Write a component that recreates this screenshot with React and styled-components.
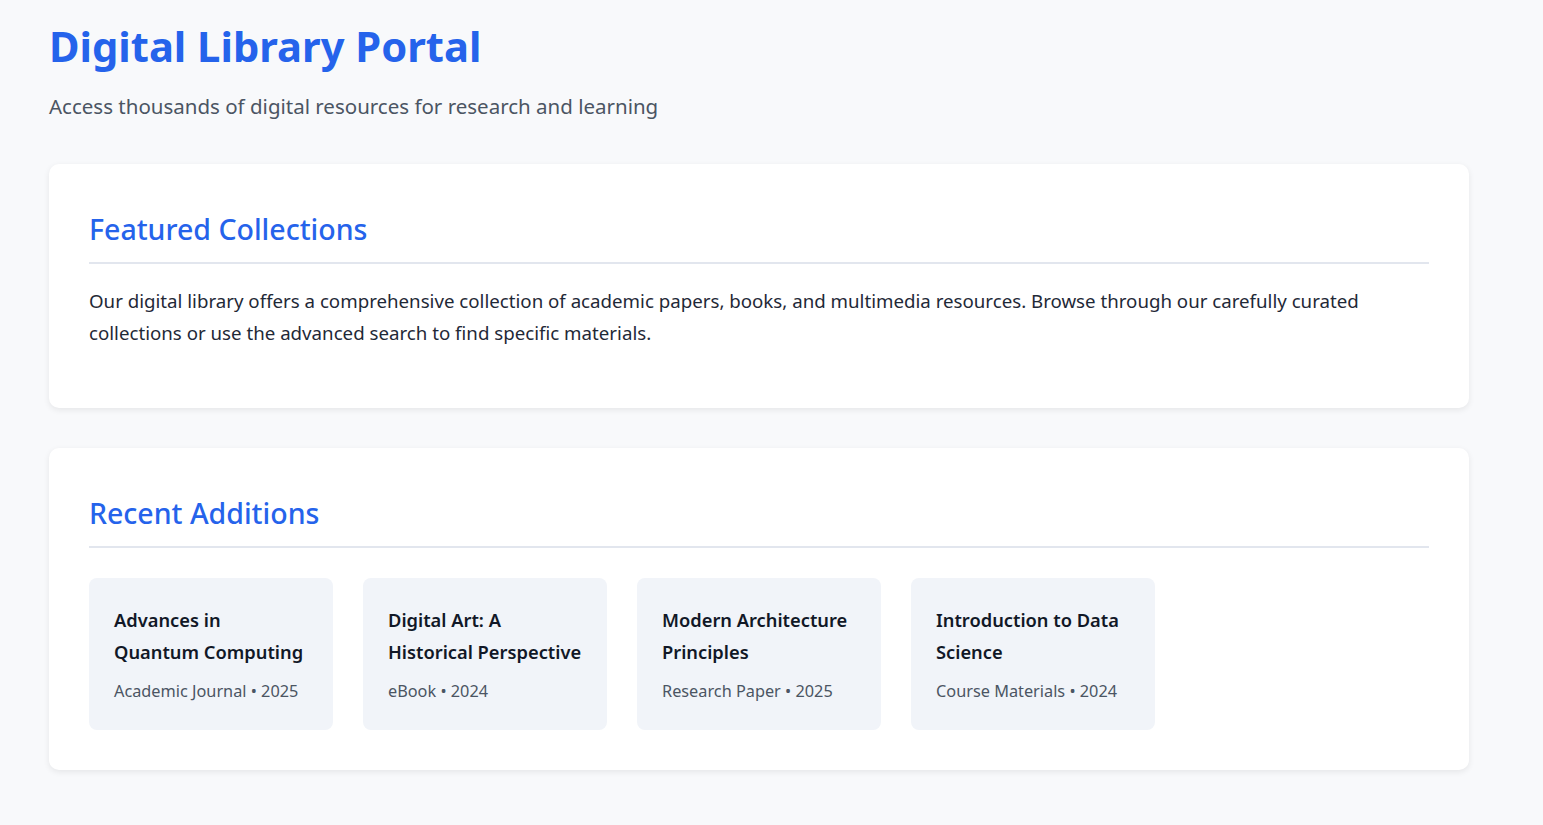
import React from 'react';
import styled, { createGlobalStyle } from 'styled-components';

const GlobalStyle = createGlobalStyle`
  * { box-sizing: border-box; }
  body {
    margin: 0;
    background: #f8f9fb;
    font-family: "Noto Sans", "Open Sans", sans-serif;
    color: #1f2937;
  }
`;

const Page = styled.div`
  max-width: 1518px;
  padding: 18px 49px 0;
`;

const Header = styled.header`
  margin-bottom: 44px;
`;

const Title = styled.h1`
  margin: 0;
  font-size: 41.7px;
  line-height: 56px;
  font-weight: 700;
  color: #2563eb;
`;

const Subtitle = styled.p`
  margin: 18px 0 0;
  font-size: 20.5px;
  line-height: 28px;
  color: #4b5563;
`;

const Section = styled.section`
  background: #ffffff;
  border-radius: 10px;
  box-shadow: 0 2px 6px rgba(0, 0, 0, 0.08);
  padding: 40px;
  margin-bottom: 40px;
`;

const SectionTitle = styled.h2`
  margin: 0;
  padding-bottom: 8px;
  border-bottom: 2px solid #e2e6ee;
  font-size: 28.5px;
  line-height: 50px;
  font-weight: 500;
  color: #2563eb;
`;

const Text = styled.p`
  margin: 21px 0 19px;
  font-size: 18.7px;
  line-height: 32px;
  color: #1f2937;
`;

const Grid = styled.div`
  display: grid;
  grid-template-columns: repeat(auto-fill, minmax(240px, 1fr));
  gap: 30px;
  margin-top: 30px;
`;

const Item = styled.div`
  background: #f1f4f9;
  border-radius: 8px;
  padding: 26px 24px 27px 25px;
`;

const ItemTitle = styled.h3`
  margin: 0;
  font-size: 18.3px;
  line-height: 32px;
  font-weight: 600;
  color: #111827;
`;

const Meta = styled.p`
  margin: 11px 0 0;
  font-size: 16.3px;
  line-height: 24px;
  color: #4b5563;
`;

const items = [
  { title: 'Advances in Quantum Computing', type: 'Academic Journal', year: 2025 },
  { title: 'Digital Art: A Historical Perspective', type: 'eBook', year: 2024 },
  { title: 'Modern Architecture Principles', type: 'Research Paper', year: 2025 },
  { title: 'Introduction to Data Science', type: 'Course Materials', year: 2024 },
];

export default function App() {
  return (
    <>
      <GlobalStyle />
      <Page>
        <Header>
          <Title>Digital Library Portal</Title>
          <Subtitle>Access thousands of digital resources for research and learning</Subtitle>
        </Header>
        <Section>
          <SectionTitle>Featured Collections</SectionTitle>
          <Text>
            Our digital library offers a comprehensive collection of academic papers, books, and multimedia
            resources. Browse through our carefully curated collections or use the advanced search to find
            specific materials.
          </Text>
        </Section>
        <Section>
          <SectionTitle>Recent Additions</SectionTitle>
          <Grid>
            {items.map((item) => (
              <Item key={item.title}>
                <ItemTitle>{item.title}</ItemTitle>
                <Meta>
                  {item.type} • {item.year}
                </Meta>
              </Item>
            ))}
          </Grid>
        </Section>
      </Page>
    </>
  );
}
